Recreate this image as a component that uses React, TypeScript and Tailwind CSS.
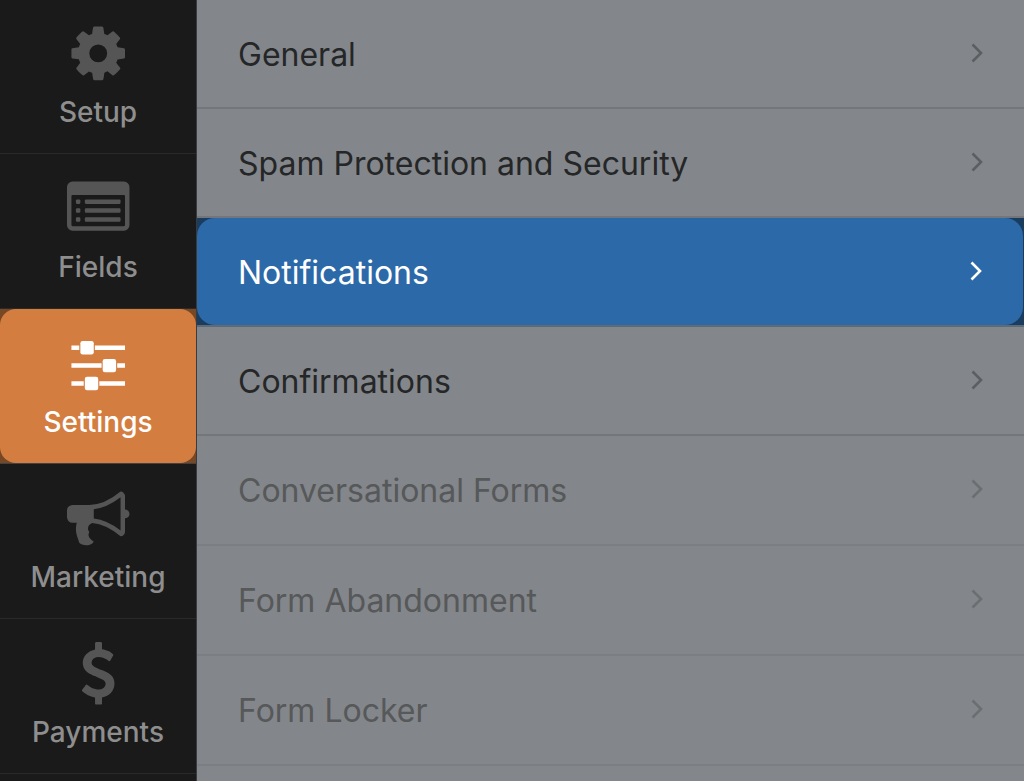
import type { ReactNode } from "react";

type NavItem = { label: string; icon: ReactNode; active?: boolean };
type PanelItem = { label: string; state: "normal" | "active" | "muted" };

function Icon({ children }: { children: ReactNode }) {
  return (
    <svg viewBox="-28 -32 1835 1835" className="size-16" fill="currentColor" aria-hidden="true">
      {children}
    </svg>
  );
}

const gear = (
  <Icon>
    <path d="M1152 896q0-106-75-181t-181-75-181 75-75 181 75 181 181 75 181-75 75-181zm512-109v222q0 12-8 23t-20 13l-185 28q-19 54-39 91 35 50 107 138 10 12 10 25t-9 23q-27 37-99 108t-94 71q-12 0-26-9l-138-108q-44 23-91 38-16 136-29 186-7 28-36 28h-222q-14 0-24.500-8.500t-11.500-21.500l-28-184q-49-16-90-37l-141 107q-10 9-25 9-14 0-25-11-126-114-165-168-7-10-7-23 0-12 8-23 15-21 51-66.500t54-70.500q-27-50-41-99l-183-27q-13-2-21-12.500t-8-23.500v-222q0-12 8-23t19-13l186-28q14-46 39-92-40-57-107-138-10-12-10-24 0-10 9-23 26-36 98.500-107.500t94.500-71.500q13 0 26 10l138 107q44-23 91-38 16-136 29-186 7-28 36-28h222q14 0 24.500 8.500t11.500 21.500l28 184q49 16 90 37l142-107q9-9 24-9 13 0 25 10 129 119 165 170 7 8 7 22 0 12-8 23-15 21-51 66.500t-54 70.500q26 50 41 98l183 28q13 2 21 12.500t8 23.500z" />
  </Icon>
);

const list = (
  <Icon>
    <path
      fillRule="evenodd"
      d="M160 128H1632a160 160 0 0 1 160 160V1376a160 160 0 0 1-160 160H160a160 160 0 0 1-160-160V288a160 160 0 0 1 160-160zM160 512a32 32 0 0 0-32 32V1376a32 32 0 0 0 32 32H1632a32 32 0 0 0 32-32V544a32 32 0 0 0-32-32z"
    />
    {[640, 896, 1152].map((y) => (
      <g key={y}>
        <rect x="256" y={y} width="128" height="128" rx="32" />
        <rect x="512" y={y} width="1024" height="128" rx="32" />
      </g>
    ))}
  </Icon>
);

const sliders = (
  <Icon>
    <path d="M128 384h224v128H128zM800 384h864v128H800zM128 896h864v128H128zM1440 896h224v128h-224zM128 1408h352v128H128zM928 1408h736v128H928z" />
    <rect x="384" y="256" width="384" height="384" rx="64" />
    <rect x="1024" y="768" width="384" height="384" rx="64" />
    <rect x="512" y="1280" width="384" height="384" rx="64" />
  </Icon>
);

const bullhorn = (
  <Icon>
    <path d="M1664 640q53 0 90.500 37.500t37.500 90.500-37.500 90.500-90.500 37.500v384q0 52-38 90t-90 38q-417-347-812-380-58 19-91 66t-31 100.500 40 92.500q-20 33-23 65.500t6 58 33.500 55 48 50 61.500 50.500q-29 58-111.500 83t-168.500 11.500-132-55.500q-7-23-29.500-87.500t-32-94.500-23-89-15-101 3.500-98.500 22-110.500h-122q-66 0-113-47t-47-113v-192q0-66 47-113t113-47h480q435 0 896-384 52 0 90 38t38 90v384zm-128 604v-954q-394 302-768 343v270q377 42 768 341z" />
  </Icon>
);

const dollar = (
  <Icon>
    <path d="M1362 1185q0 153-99.500 263.500t-258.500 136.500v175q0 14-9 23t-23 9h-135q-13 0-22.500-9.500t-9.500-22.500v-175q-66-9-127.500-31t-101.500-44.500-74-48-46.500-37.500-17.500-18q-17-21-2-41l103-135q7-10 23-12 15-2 24 9l2 2q113 99 243 125 37 8 74 8 81 0 142.500-43t61.500-122q0-28-15-53t-33.500-42-58.500-37.500-66-32-80-32.500q-39-16-61.500-25t-61.500-26.500-62.500-31-56.500-35.500-53.500-42.500-43.500-49-35.500-58-21-66.500-8.500-78q0-138 98-242t255-134v-180q0-13 9.500-22.500t22.500-9.500h135q14 0 23 9t9 23v176q57 6 110.500 23t87 33.500 63.500 37.500 39 29 15 14q17 18 5 38l-81 146q-8 15-23 16-14 3-27-7-3-3-14.500-12t-39-26.500-58.500-32-74.500-26-85.500-11.500q-95 0-155 43t-60 111q0 26 8.500 48t29.500 41.500 39.500 33 56 31 60.500 27 70 27.500q53 20 81 31.500t76 35 75.500 42.500 62 50 53 63.500 31.500 76.500 13 94z" />
  </Icon>
);

const navItems: NavItem[] = [
  { label: "Setup", icon: gear },
  { label: "Fields", icon: list },
  { label: "Settings", icon: sliders, active: true },
  { label: "Marketing", icon: bullhorn },
  { label: "Payments", icon: dollar },
];

const panelItems: PanelItem[] = [
  { label: "General", state: "normal" },
  { label: "Spam Protection and Security", state: "normal" },
  { label: "Notifications", state: "active" },
  { label: "Confirmations", state: "normal" },
  { label: "Conversational Forms", state: "muted" },
  { label: "Form Abandonment", state: "muted" },
  { label: "Form Locker", state: "muted" },
];

const wrapStyles = {
  normal: "h-[109px] border-b-2 border-[#73767a]",
  active: "h-[109px] border-b-2 border-[#5f6a77] bg-[#1a3c5f] pr-px",
  muted: "h-[110px] border-b-2 border-[#7b7e82]",
};

const rowStyles = {
  normal: "text-[#252627]",
  active: "rounded-[18px] bg-[#2c69a8] text-white",
  muted: "text-[#565859]",
};

const chevronStyles = {
  normal: "text-[#5c5f62]",
  active: "text-white",
  muted: "text-[#6c6f72]",
};

function NavButton({ label, icon, active }: NavItem) {
  return (
    <li className={`h-[155px] border-b ${active ? "border-[#3f4246] bg-[#784724]" : "border-[#2a2a2a]"}`}>
      <button
        type="button"
        aria-current={active ? "page" : undefined}
        className={`flex h-full w-full flex-col items-center gap-2 pt-[22px] text-[28px] leading-[38px] font-medium ${
          active ? "rounded-[16px] bg-[#d37e40] text-white" : "text-[#8e8e8e]"
        }`}
      >
        <span className={active ? "text-white" : "text-[#555555]"}>{icon}</span>
        <span>{label}</span>
      </button>
    </li>
  );
}

function PanelRow({ label, state }: PanelItem) {
  return (
    <li className={wrapStyles[state]}>
      <button
        type="button"
        className={`flex h-full w-full items-center justify-between pr-[38px] pl-[41px] text-left text-[32px] leading-10 ${rowStyles[state]}`}
      >
        <span className="pt-0.5">{label}</span>
        <svg
          viewBox="0 0 16 24"
          className={`h-6 w-4 ${chevronStyles[state]}`}
          fill="none"
          stroke="currentColor"
          strokeWidth="2.600"
          aria-hidden="true"
        >
          <path d="M2.500 2.500L11 11L2.500 19.500" />
        </svg>
      </button>
    </li>
  );
}

export default function App() {
  return (
    <div className="flex h-screen overflow-hidden bg-[#83868a] font-['Inter',sans-serif]">
      <nav aria-label="Form builder" className="w-[197px] shrink-0 border-r border-[#3a3b3c] bg-[#1a1a1a]">
        <ul className="-mt-px">
          {navItems.map((item) => (
            <NavButton key={item.label} {...item} />
          ))}
        </ul>
      </nav>
      <main className="min-w-0 flex-1">
        <ul>
          {panelItems.map((item) => (
            <PanelRow key={item.label} {...item} />
          ))}
        </ul>
      </main>
    </div>
  );
}
